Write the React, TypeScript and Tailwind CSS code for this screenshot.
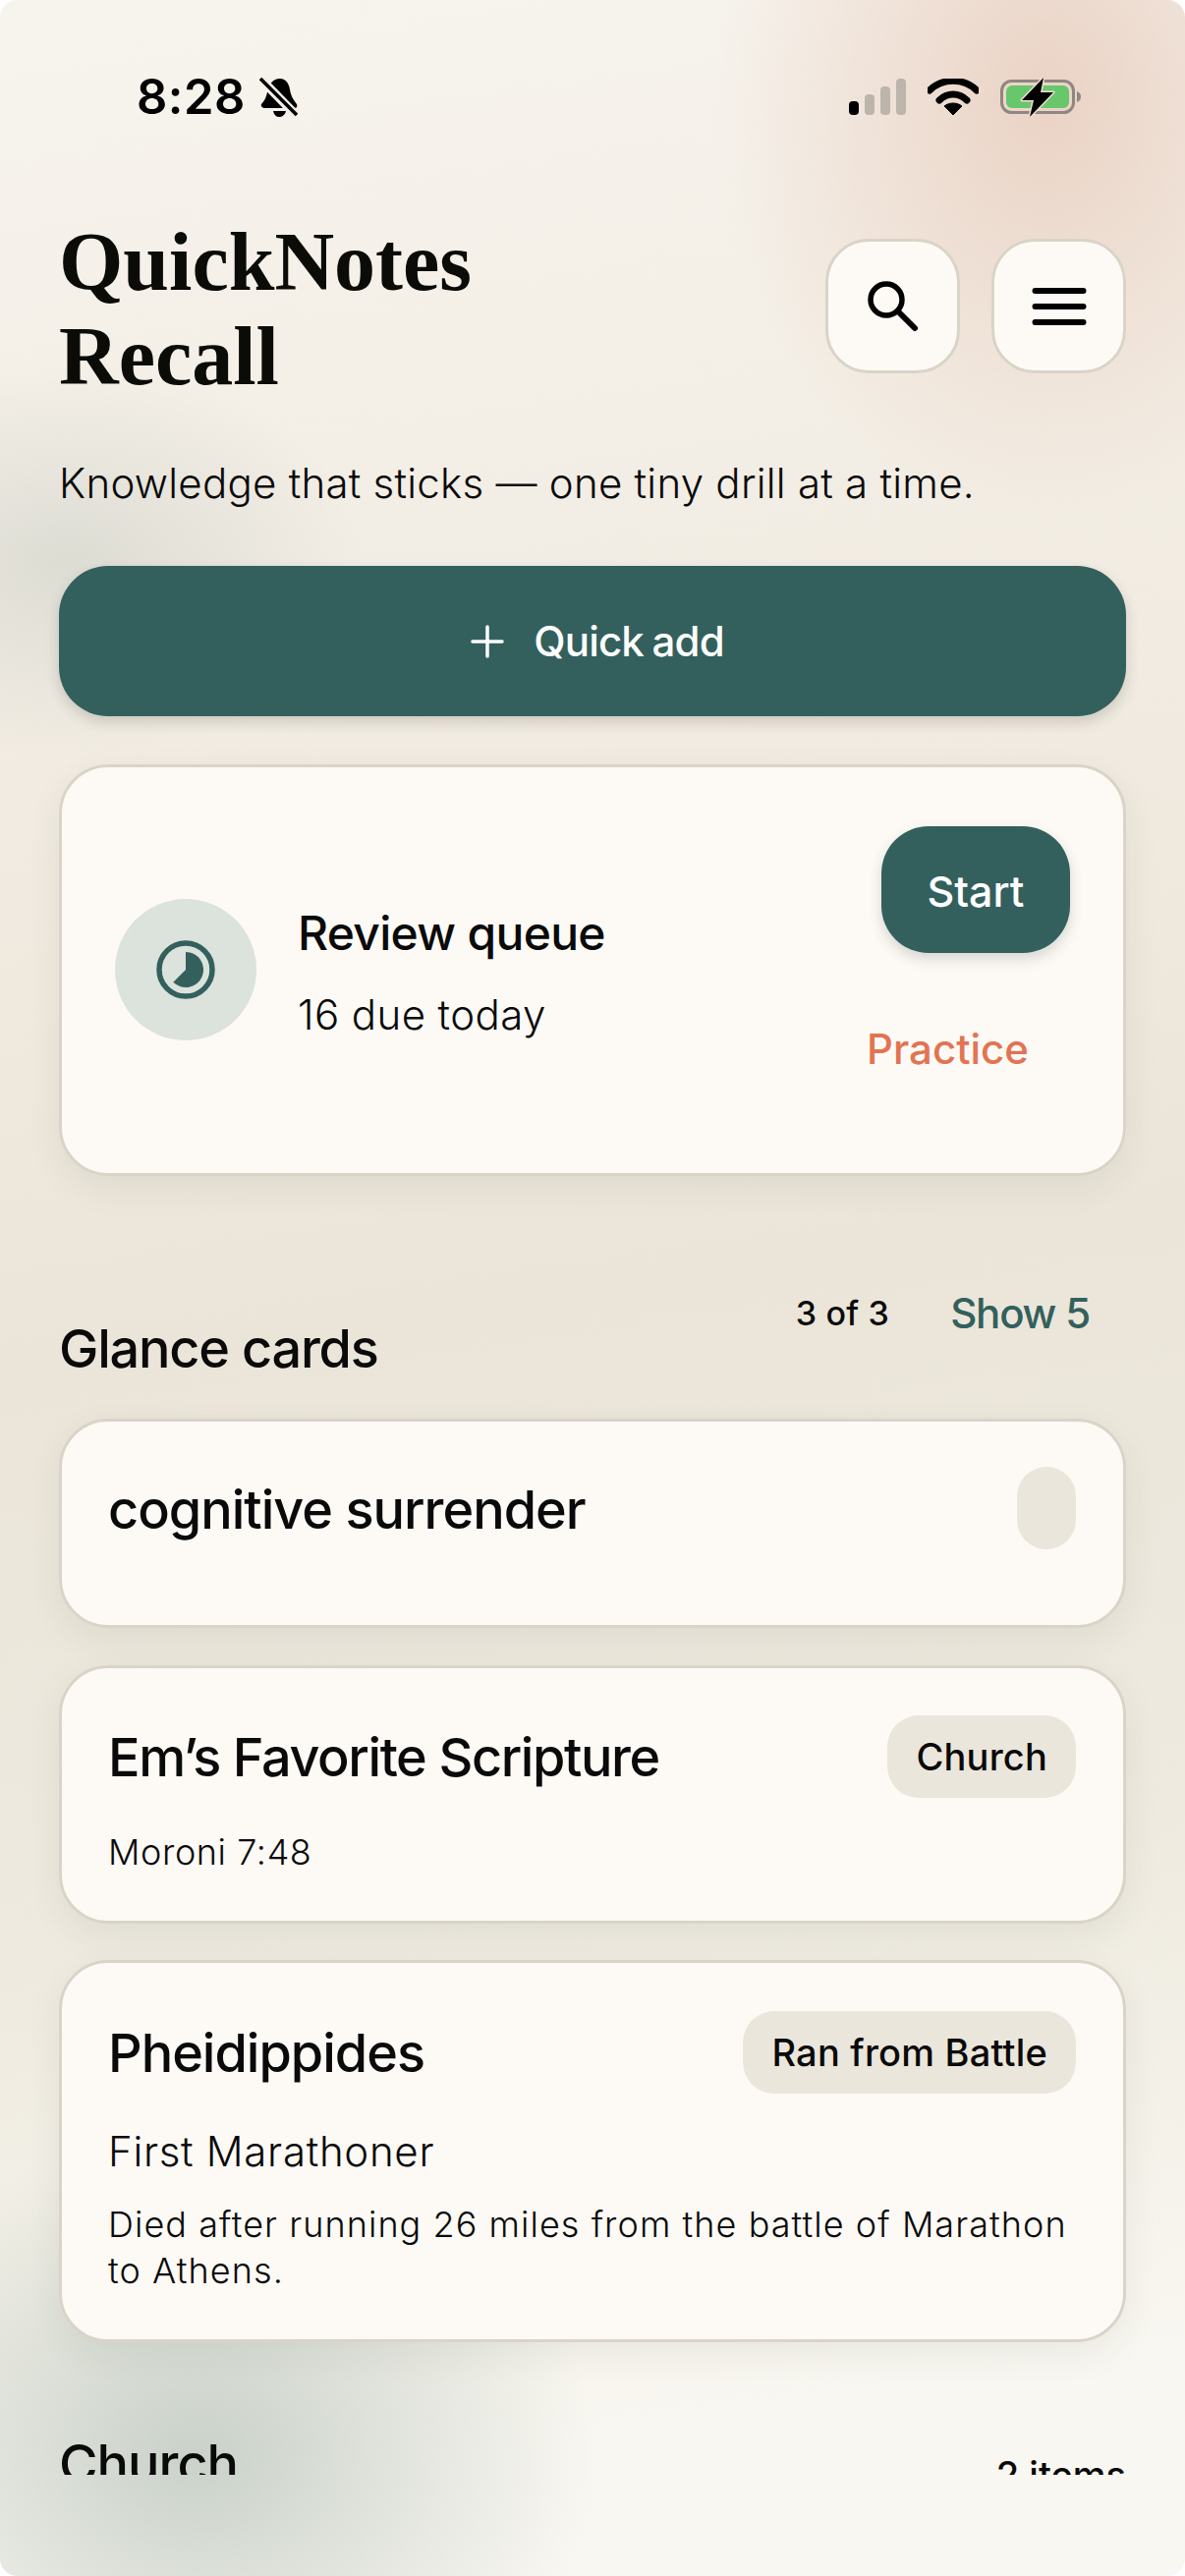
import React from "react";

const Signal = () => (
  <svg width="58" height="37" viewBox="0 0 58 37" className="block">
    <rect x="0" y="23" width="10" height="14" rx="4" fill="#000" />
    <rect x="16" y="16" width="10" height="21" rx="4" fill="#bdb5ab" />
    <rect x="32" y="8" width="10" height="29" rx="4" fill="#bdb5ab" />
    <rect x="48" y="0" width="10" height="37" rx="4" fill="#bdb5ab" />
  </svg>
);

const Wifi = () => (
  <svg width="52" height="37" viewBox="0 0 52 37" className="block">
    <path d="M2 12 C15 -1 37 -1 50 12" fill="none" stroke="#000" strokeWidth="7" strokeLinecap="round" />
    <path d="M12 22 C20 14 32 14 40 22" fill="none" stroke="#000" strokeWidth="7" strokeLinecap="round" />
    <path d="M26 37 L17 28 C22 24 30 24 35 28 Z" fill="#000" stroke="#000" strokeWidth="1" strokeLinejoin="round" />
  </svg>
);

const Battery = () => (
  <svg width="82" height="40" viewBox="0 0 82 40" className="block">
    <rect x="1.5" y="3.5" width="73" height="32" rx="10" fill="none" stroke="#8f8780" strokeWidth="3" />
    <rect x="6" y="8" width="64" height="23" rx="6" fill="#68c76b" />
    <path d="M78 14 C81 15 82 17 82 19.5 C82 22 81 24 78 25 Z" fill="#8f8780" />
    <path d="M44 0 L22 23 L34 23 L30 40 L54 15 L41 15 Z" fill="#000" stroke="#f0dfd3" strokeWidth="3" paintOrder="stroke" strokeLinejoin="round" />
  </svg>
);

const BellOff = () => (
  <svg width="40" height="42" viewBox="0 0 40 42" className="block">
    <path d="M8 16 C9 8 14 2 21 2 C27 2 30 7 31 13 C32 20 35 24 38 28 C39 30 38 32 36 32 L6 32 C3 32 1 30 2 28 C5 25 7 21 8 16 Z" fill="#000" />
    <path d="M14 35 L27 35 C26 39 23 41 20 41 C17 41 15 39 14 35 Z" fill="#000" />
    <path d="M2 3 L38 40" stroke="#f3efe8" strokeWidth="9" />
    <path d="M1 2 L38 39" stroke="#000" strokeWidth="3.5" />
  </svg>
);

const SearchIcon = () => (
  <svg width="56" height="56" viewBox="0 0 56 56" fill="none" className="block">
    <circle cx="21" cy="21" r="16" stroke="#000" strokeWidth="5.5" />
    <path d="M33 33 L50 50" stroke="#000" strokeWidth="6" strokeLinecap="round" />
  </svg>
);

const MenuIcon = () => (
  <svg width="56" height="40" viewBox="0 0 56 40" fill="none" className="block">
    <path d="M3.5 4 H52.5 M3.5 20 H52.5 M3.5 36 H52.5" stroke="#000" strokeWidth="6" strokeLinecap="round" />
  </svg>
);

const ClockIcon = () => (
  <svg width="60" height="60" viewBox="0 0 60 60" fill="none" className="block">
    <circle cx="30" cy="30" r="27" stroke="#33605d" strokeWidth="5.5" />
    <path d="M30 12 A18 18 0 1 1 17.3 42.7 L30 30 Z" fill="#33605d" />
  </svg>
);

const Chip = ({ children, empty }: { children?: React.ReactNode; empty?: boolean }) => (
  <span
    className={`flex h-[84px] shrink-0 items-center rounded-[32px] bg-[#ebe6db] text-[38px] font-medium tracking-[0.2px] text-[#0a0a0a] ${empty ? "w-[60px]" : "px-[29px]"}`}
  >
    {children}
  </span>
);

const cardClass =
  "rounded-[50px] border-[3px] border-[#dad4c8] bg-[#fdfaf6] shadow-[0_12px_36px_rgba(40,50,40,0.07)]";

export default function App() {
  return (
    <div
      className="relative h-[2622px] w-[1206px] overflow-hidden rounded-[18px] bg-[linear-gradient(172deg,#f7f4ee_0%,#f1ebe1_30%,#ebe5d9_50%,#eeeadf_72%,#f9f7f1_92%)] text-[#0a0a0a]"
      style={{ fontFamily: "Inter, 'Noto Sans', sans-serif" }}
    >
      <div className="pointer-events-none absolute -right-[200px] -top-[330px] h-[860px] w-[680px] bg-[radial-gradient(closest-side,rgba(232,205,190,0.85),rgba(232,205,190,0)_100%)]" />
      <div className="pointer-events-none absolute -left-[230px] top-[370px] h-[400px] w-[600px] bg-[radial-gradient(closest-side,rgba(170,180,172,0.3),rgba(170,180,172,0)_100%)]" />
      <div className="pointer-events-none absolute -left-[210px] top-[2180px] h-[640px] w-[820px] bg-[radial-gradient(closest-side,rgba(170,185,175,0.6),rgba(170,185,175,0)_100%)]" />

      <div className="relative flex h-[2519px] flex-col overflow-hidden px-[60px]">
        <div className="mt-[60px] flex h-[77px] shrink-0 items-center justify-between pl-[79px] pr-[46px]">
          <div className="flex items-center gap-[14px]">
            <span className="text-[49px] font-semibold leading-none tracking-[0.5px] text-black">8:28</span>
            <BellOff />
          </div>
          <div className="flex items-center gap-[22px]">
            <Signal />
            <Wifi />
            <Battery />
          </div>
        </div>

        <div className="mt-[79px] flex items-start justify-between">
          <h1
            className="pt-[3px] text-[84px] font-bold leading-[96px] text-[#0b0b08]"
            style={{ fontFamily: "'Liberation Serif', serif" }}
          >
            QuickNotes
            <br />
            Recall
          </h1>
          <div className="mt-[27px] flex gap-[32px]">
            <button className="flex h-[137px] w-[137px] items-center justify-center rounded-[44px] border-[3px] border-[#dad4c8] bg-[#fdfaf6]">
              <SearchIcon />
            </button>
            <button className="flex h-[137px] w-[137px] items-center justify-center rounded-[44px] border-[3px] border-[#dad4c8] bg-[#fdfaf6]">
              <MenuIcon />
            </button>
          </div>
        </div>

        <p className="mt-[51px] text-[42px] font-[350] leading-[60px] tracking-[0.25px]">Knowledge that sticks — one tiny drill at a time.</p>

        <button className="mt-[54px] flex h-[153px] shrink-0 items-center justify-center gap-[30px] rounded-[50px] bg-[#33605d] pl-[10px] text-[42px] font-medium tracking-[-0.8px] text-white shadow-[0_6px_14px_rgba(40,50,40,0.18)] [word-spacing:-2px]">
          <svg width="34" height="34" viewBox="0 0 34 34" fill="none" className="block">
            <path d="M17 2 V32 M2 17 H32" stroke="#fff" strokeWidth="3.5" strokeLinecap="round" />
          </svg>
          Quick add
        </button>

        <section className={`mt-[49px] flex h-[419px] shrink-0 items-center justify-between pb-[2px] pl-[54px] pr-[54px] ${cardClass}`}>
          <div className="flex items-center gap-[42px]">
            <div className="flex h-[144px] w-[144px] items-center justify-center rounded-full bg-[#dce2dc]">
              <ClockIcon />
            </div>
            <div className="flex flex-col pt-[10px]">
              <span className="text-[48px] font-medium leading-[60px] tracking-[-0.7px]">Review queue</span>
              <span className="mt-[23px] text-[42px] font-[350] leading-[60px] tracking-[0.4px]">16 due today</span>
            </div>
          </div>
          <div className="mb-[34px] flex flex-col items-end">
            <button className="flex h-[129px] w-[192px] items-center justify-center rounded-[48px] bg-[#33605d] pt-[3px] text-[43px] font-medium text-white shadow-[0_6px_14px_rgba(40,50,40,0.18)]">
              Start
            </button>
            <span className="mr-[42px] mt-[68px] text-[42px] font-medium leading-[60px] text-[#e27452]">Practice</span>
          </div>
        </section>

        <div className="mt-[110px] flex items-start justify-between">
          <h2 className="mt-[33px] text-[54px] font-medium leading-[66px] tracking-[-1.2px]">Glance cards</h2>
          <div className="mr-[37px] flex items-center gap-[62px]">
            <span className="text-[34px] font-medium leading-[60px] tracking-[0.2px]">3 of 3</span>
            <span className="text-[42px] font-medium leading-[60px] tracking-[-1.2px] text-[#33605d]">Show 5</span>
          </div>
        </div>

        <article className={`mt-[38px] h-[213px] shrink-0 ${cardClass} pl-[47px] pr-[48px] pt-[46px]`}>
          <div className="flex items-start justify-between">
            <h3 className="pt-[2px] text-[54px] font-medium leading-[84px] tracking-[-1px]">cognitive surrender</h3>
            <Chip empty />
          </div>
        </article>

        <article className={`mt-[38px] h-[263px] shrink-0 ${cardClass} pl-[47px] pr-[48px] pt-[48px]`}>
          <div className="flex items-start justify-between">
            <h3 className="pt-[1px] text-[54px] font-medium leading-[84px] tracking-[-1.4px]">Em’s Favorite Scripture</h3>
            <Chip>Church</Chip>
          </div>
          <p className="mt-[30px] text-[36px] font-[350] leading-[48px] tracking-[0.6px]">Moroni 7:48</p>
        </article>

        <article className={`mt-[37px] h-[389px] shrink-0 ${cardClass} pl-[47px] pr-[48px] pt-[49px]`}>
          <div className="flex items-start justify-between">
            <h3 className="pt-[1px] text-[54px] font-medium leading-[84px] tracking-[-1px]">Pheidippides</h3>
            <Chip>Ran from Battle</Chip>
          </div>
          <p className="mt-[28px] text-[42px] font-[350] leading-[60px] tracking-[0.7px]">First Marathoner</p>
          <p className="mt-[21px] text-[36px] font-[350] leading-[47px] tracking-[1.05px]">Died after running 26 miles from the battle of Marathon to Athens.</p>
        </article>

        <div className="mt-[91px] flex items-start justify-between">
          <h2 className="text-[54px] font-medium leading-[66px] tracking-[-1px]">Church</h2>
          <span className="mt-[14px] text-[38px] font-medium leading-[60px]">2 items</span>
        </div>
      </div>
    </div>
  );
}
